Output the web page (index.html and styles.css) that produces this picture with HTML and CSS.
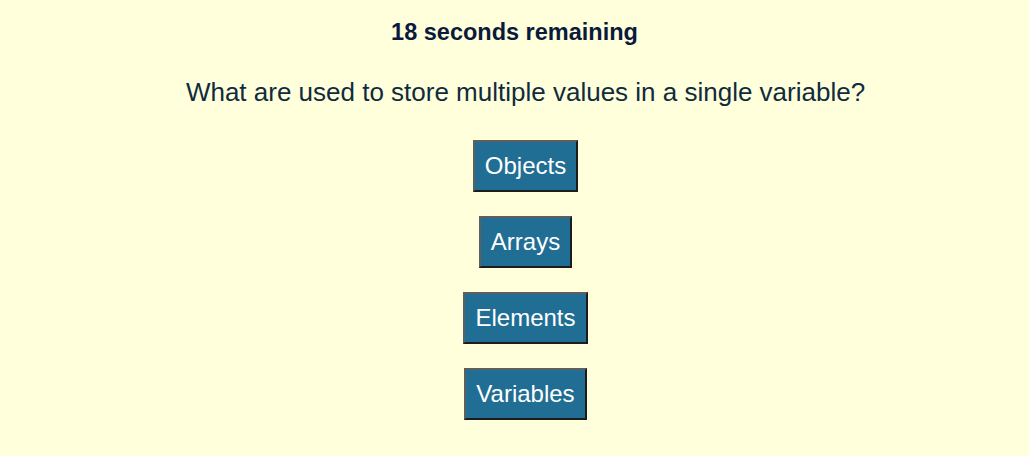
FILE: index.html
```html
<!DOCTYPE html>
<html>
<head>
<meta charset="utf-8">
<link rel="stylesheet" href="styles.css">
</head>
<body>
<main class="quiz">
  <div class="timer">18 seconds remaining</div>
  <section class="card">
    <div class="question">What are used to store multiple values in a single variable?</div>
    <div class="choices">
      <button class="choice">Objects</button>
      <button class="choice">Arrays</button>
      <button class="choice">Elements</button>
      <button class="choice">Variables</button>
    </div>
  </section>
</main>
</body>
</html>
```
FILE: styles.css
```css
html, body {
  margin: 0;
  padding: 0;
  background: #ffffdc;
  font-family: "Liberation Sans", Arial, sans-serif;
  color: #0b2138;
}
.quiz {
  display: flex;
  flex-direction: column;
  align-items: center;
  padding-top: 18px;
}
.timer {
  font-weight: bold;
  font-size: 23.5px;
  line-height: 28px;
  color: #0a1a3c;
}
.card {
  display: flex;
  flex-direction: column;
  align-items: center;
  padding-left: 22px;
}
.question {
  margin-top: 31px;
  font-size: 26px;
  line-height: 30px;
  color: #0f2b3d;
}
.choices {
  margin-top: 33px;
  display: flex;
  flex-direction: column;
  align-items: center;
  gap: 24px;
}
.choice {
  font-family: "Liberation Sans", Arial, sans-serif;
  font-size: 24px;
  line-height: 28px;
  padding: 10px 10px;
  background: #206e94;
  color: #ffffff;
  border-width: 2px;
  border-style: solid;
  border-color: #5e5e5e #1c1c1c #1c1c1c #5e5e5e;
}
```
